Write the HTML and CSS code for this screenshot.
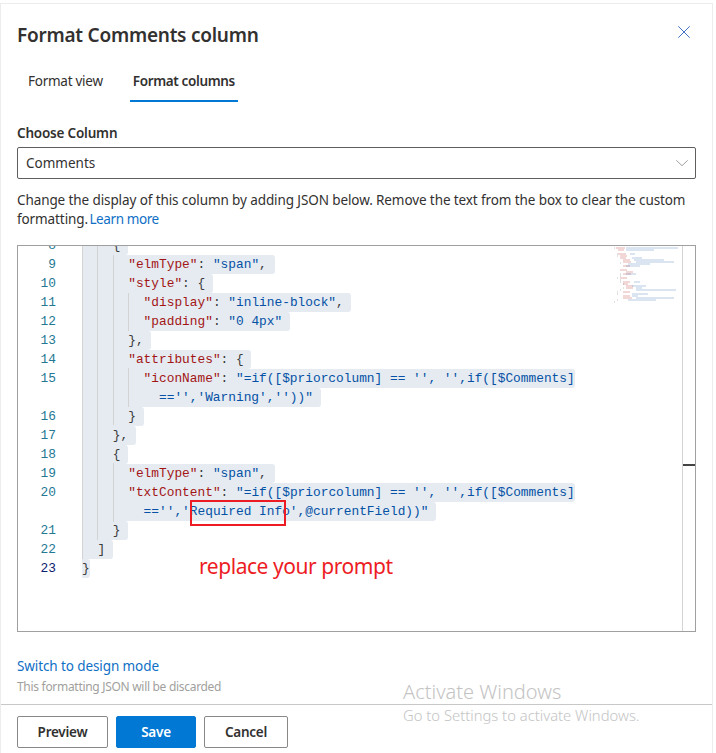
FILE: index.html
```html
<!DOCTYPE html>
<html lang="en">
<head>
<meta charset="utf-8">
<title>Format Comments column</title>
<link rel="stylesheet" href="styles.css">
</head>
<body>
<div class="panel">
  <div class="content">
    <div class="head">
      <h1 class="title">Format Comments column</h1>
      <svg class="close" viewBox="0 0 12 12" width="12" height="12"><path d="M0.3 0.3L11.7 11.7M11.7 0.3L0.3 11.7"/></svg>
    </div>
    <div class="tabs">
      <div class="tab">Format view</div>
      <div class="tab active">Format columns</div>
    </div>
    <label class="label">Choose Column</label>
    <div class="dropdown">
      <span>Comments</span>
      <svg class="chev" viewBox="0 0 12 6" width="12" height="6"><path d="M0.3 0.3L6 5.7L11.7 0.3"/></svg>
    </div>
    <p class="desc">Change the display of this column by adding JSON below. Remove the text from the box to clear the custom formatting. <a class="link learn">Learn more</a></p>
    <div class="editor">
      <div class="main">
        <div class="lines">
<div class="row"><span class="num">8</span><span class="sel"><b>    {</b></span></div>
<div class="row"><span class="num">9</span><span class="sel">      <i>"elmType"</i><b>: </b><u>"span"</u><b>,</b></span></div>
<div class="row"><span class="num">10</span><span class="sel">      <i>"style"</i><b>: {</b></span></div>
<div class="row"><span class="num">11</span><span class="sel">        <i>"display"</i><b>: </b><u>"inline-block"</u><b>,</b></span></div>
<div class="row"><span class="num">12</span><span class="sel">        <i>"padding"</i><b>: </b><u>"0 4px"</u></span></div>
<div class="row"><span class="num">13</span><span class="sel"><b>      },</b></span></div>
<div class="row"><span class="num">14</span><span class="sel">      <i>"attributes"</i><b>: {</b></span></div>
<div class="row"><span class="num">15</span><span class="sel wrap">        <i>"iconName"</i><b>: </b><u>"=if([$priorcolumn] == '', '',if([$Comments]</u></span></div>
<div class="row"><span class="num"></span><span class="sel">          <u>=='','Warning',''))"</u></span></div>
<div class="row"><span class="num">16</span><span class="sel"><b>      }</b></span></div>
<div class="row"><span class="num">17</span><span class="sel"><b>    },</b></span></div>
<div class="row"><span class="num">18</span><span class="sel"><b>    {</b></span></div>
<div class="row"><span class="num">19</span><span class="sel">      <i>"elmType"</i><b>: </b><u>"span"</u><b>,</b></span></div>
<div class="row"><span class="num">20</span><span class="sel wrap">      <i>"txtContent"</i><b>: </b><u>"=if([$priorcolumn] == '', '',if([$Comments]</u></span></div>
<div class="row"><span class="num"></span><span class="sel">        <u>=='','Required Info',@currentField))"</u></span></div>
<div class="row"><span class="num">21</span><span class="sel"><b>    }</b></span></div>
<div class="row"><span class="num">22</span><span class="sel"><b>  ]</b></span></div>
<div class="row"><span class="num current">23</span><span class="sel wrap"><b>}</b></span></div>
        </div>
        <span class="guide g1"></span>
        <span class="guide g2"></span>
        <span class="guide g3"></span>
        <span class="guide g4"></span>
        <span class="guide g5"></span>
        <span class="guide g6"></span>
        <svg class="minimap" viewBox="0 0 68 60" width="68" height="60">
          <path class="mm-dark" d="M2 2h1M5 8h1M5 10h1M8 17h1M8 28h1M8 30h1M5 32h1M8 34h1M8 36h1M11 38h1M11 42h1M8 44h1M5 46h1M5 48h1M5 54h1M2 56h1"/>
          <path class="mm-red" d="M4 2h9M6 4h6M6 8h8M8 10h7M8 12h6M11 14h7M11 16h8M11 20h7M8 24h7M14 26h7M11 28h8M8 32h7M11 36h7M11 38h5M14 40h7M14 42h7M11 46h7M11 50h7M11 52h9"/>
          <path class="mm-blue" d="M14 2h52M14 4h28M18 8h5M20 12h10M22 14h30M24 16h38M16 18h22M14 20h14M14 28h10M22 36h6M20 40h14M24 42h6M24 44h40M20 48h16M20 50h6M24 52h38M16 54h28"/>
        </svg>
        <span class="redbox"></span>
        <span class="note">replace your prompt</span>
      </div>
      <div class="scroll"><span class="cursor"></span></div>
    </div>
    <a class="link switch">Switch to design mode</a>
    <p class="hint">This formatting JSON will be discarded</p>
  </div>
  <div class="footer">
    <button class="btn preview">Preview</button>
    <button class="btn primary">Save</button>
    <button class="btn cancel">Cancel</button>
  </div>
  <div class="watermark">
    <div class="wm1">Activate Windows</div>
    <div class="wm2">Go to Settings to activate Windows.</div>
  </div>
</div>
</body>
</html>
```
FILE: styles.css
```css
* { box-sizing: border-box; }
html, body { margin: 0; padding: 0; background: #fff; }
body { font-family: "Noto Sans", "Open Sans", sans-serif; color: #323130; font-size: 13.5px; overflow: hidden; height: 753px; padding-top: 3px; }
.panel { position: relative; width: 713px; height: 750px; border: 1px solid #ececec; border-bottom: 0; background: #fff; letter-spacing: -0.1px; }
.content { padding: 17px 16px 0; }
.head { display: flex; justify-content: space-between; align-items: flex-start; }
.title { margin: 0; font-size: 19px; line-height: 28px; font-weight: 600; letter-spacing: -0.24px; }
.close { margin: 5px 6px 0 0; fill: none; stroke: #4472c4; stroke-width: 1; }
.tabs { display: flex; gap: 24px; margin: 14px 0 0 8px; }
.tab { padding: 8px 3px 9px; line-height: 20px; height: 39px; border-bottom: 2px solid transparent; letter-spacing: -0.26px; }
.tab.active { font-weight: 600; border-bottom-color: #0078d4; letter-spacing: -0.36px; }
.label { display: block; margin-top: 21px; line-height: 20px; font-weight: 600; letter-spacing: -0.2px; }
.dropdown { display: flex; align-items: center; justify-content: space-between; height: 32px; margin-top: 4px; padding: 0 7px 0 8px; border: 1px solid #605e5c; border-radius: 2px; letter-spacing: 0; }
.chev { fill: none; stroke: #a19f9d; stroke-width: 1; }
.desc { margin: 12px 0 0; line-height: 19px; }
.link { color: #0f6fc6; }
.learn { letter-spacing: -0.4px; margin-left: -2px; }
.editor { display: flex; height: 387px; margin-top: 16px; border: 1px solid #a0a0a0; }
.main { position: relative; flex: 1; overflow: hidden; }
.lines { margin-top: -10px; font-family: "Liberation Mono", monospace; font-size: 12.83px; letter-spacing: 0; }
.row { display: flex; height: 19px; line-height: 19px; white-space: pre; }
.num { width: 64px; padding-right: 26px; text-align: right; color: #237893; flex: none; }
.num.current { color: #0b216f; }
.sel { background: #e5ebf1; padding-right: 7.7px; border-radius: 0 3px 3px 0; }
.sel.wrap { padding-right: 0; }
.sel b { font-weight: 400; color: #3b3b3b; }
.sel i { font-style: normal; color: #a31515; }
.sel u { text-decoration: none; color: #0451a5; }
.guide { position: absolute; width: 1px; background: #d3d3d3; }
.g1 { left: 64px; top: 0; height: 313px; }
.g2 { left: 79px; top: 0; height: 294px; }
.g3 { left: 95px; top: 9px; height: 170px; }
.g4 { left: 95px; top: 217px; height: 59px; }
.g5 { left: 110px; top: 47px; height: 38px; }
.g6 { left: 110px; top: 122px; height: 39px; }
.minimap { position: absolute; left: 594px; top: 0; }
.mm-dark { fill: none; stroke: #777; stroke-width: 1; opacity: .45; }
.mm-red { fill: none; stroke: #c0504d; stroke-width: 1; opacity: .45; }
.mm-blue { fill: none; stroke: #4d80c0; stroke-width: 1; opacity: .4; }
.redbox { position: absolute; left: 172px; top: 254px; width: 96px; height: 26px; border: 2px solid #ed1c24; }
.note { position: absolute; left: 181px; top: 305px; line-height: 30px; font-size: 21px; color: #ed1c24; letter-spacing: -0.45px; }
.scroll { position: relative; width: 13px; border-left: 1px solid #d4d4d4; }
.cursor { position: absolute; left: 0; right: 0; top: 218px; height: 2px; background: #444; }
.switch { display: block; margin-top: 24px; line-height: 20px; }
.hint { margin: 3px 0 0; font-size: 12px; line-height: 16px; color: #a19f9d; letter-spacing: -0.3px; }
.footer { display: flex; gap: 8px; margin-top: 9px; padding: 11px 16px 0; border-top: 1px solid #c8c8c8; }
.btn { height: 32px; padding: 0; font: 600 13.5px "Noto Sans", "Open Sans", sans-serif; letter-spacing: -0.25px; color: #323130; background: #fff; border: 1px solid #8a8886; border-radius: 2px; }
.preview { width: 91px; }
.primary { width: 80px; color: #fff; background: #0078d4; border-color: #0078d4; }
.cancel { width: 84px; }
.watermark { position: absolute; left: 402px; top: 674px; color: #c4c4c4; letter-spacing: 0; }
.wm1 { font-size: 20px; font-weight: 300; line-height: 28px; }
.wm2 { font-size: 14.8px; font-weight: 300; line-height: 20px; margin-top: -1px; }
```
